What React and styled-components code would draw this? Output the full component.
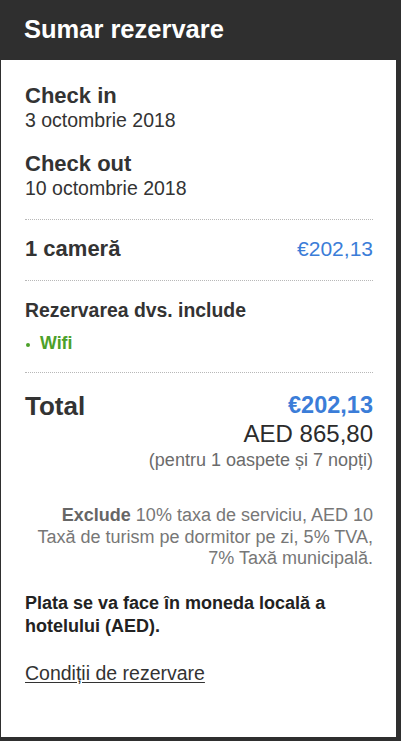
import React from 'react';
import styled, { createGlobalStyle } from 'styled-components';

const GlobalStyle = createGlobalStyle`
  html, body {
    margin: 0;
    padding: 0;
    background: #fff;
  }
  body {
    font-family: 'Liberation Sans', Arial, sans-serif;
    color: #333;
  }
`;

const Frame = styled.div`
  display: flex;
  flex-direction: column;
  min-height: 100vh;
  box-sizing: border-box;
  background: #2f2f2f;
  padding: 0 5px 4px 1px;
`;

const Header = styled.h1`
  margin: 0 -5px 0 -1px;
  height: 60px;
  display: flex;
  align-items: center;
  padding: 0 0 2px 24px;
  box-sizing: border-box;
  font-size: 25.5px;
  font-weight: 700;
  color: #fff;
`;

const Panel = styled.div`
  flex: 1;
  background: #fff;
  padding: 24px 23px 0 24px;
`;

const Label = styled.div`
  font-size: 22px;
  font-weight: 700;
  line-height: 24px;
  margin-top: ${(p) => p.$top || 0}px;
`;

const DateText = styled.div`
  font-size: 19.5px;
  line-height: 23px;
  margin-top: 1px;
`;

const Divider = styled.hr`
  border: 0;
  border-top: 1px dotted #b8b8b8;
  margin: ${(p) => p.$top}px 0 0;
  height: 0;
`;

const Row = styled.div`
  display: flex;
  justify-content: space-between;
  align-items: ${(p) => p.$align || 'baseline'};
  margin-top: ${(p) => p.$top || 0}px;
`;

const Price = styled.span`
  font-size: 21px;
  color: #3b7dd8;
`;

const SubTitle = styled.div`
  font-size: 19.4px;
  font-weight: 700;
  line-height: 22px;
  margin-top: 18px;
`;

const Amenities = styled.ul`
  list-style: none;
  margin: 12px 0 0;
  padding: 0;
`;

const Amenity = styled.li`
  position: relative;
  padding-left: 15px;
  font-size: 17.8px;
  line-height: 20px;
  font-weight: 700;
  color: #4ca12a;

  &::before {
    content: '';
    position: absolute;
    left: 1px;
    top: 10px;
    width: 4px;
    height: 4px;
    border-radius: 50%;
    background: #4ca12a;
  }
`;

const TotalLabel = styled.div`
  font-size: 26px;
  font-weight: 700;
  line-height: 28px;
`;

const Amounts = styled.div`
  display: flex;
  flex-direction: column;
  align-items: flex-end;
  text-align: right;
`;

const TotalPrice = styled.div`
  font-size: 23.5px;
  font-weight: 700;
  line-height: 26px;
  color: #3b7dd8;
`;

const LocalPrice = styled.div`
  font-size: 24px;
  line-height: 26px;
  margin-top: 3px;
  color: #2b2b2b;
`;

const Note = styled.div`
  font-size: 18px;
  line-height: 22px;
  margin-top: 2px;
  color: #6b6b6b;
`;

const Excludes = styled.p`
  margin: 34px 0 0;
  text-align: right;
  font-size: 18px;
  line-height: 21.5px;
  color: #777;

  b {
    color: #666;
  }
`;

const Payment = styled.p`
  margin: 22px 0 0;
  font-size: 18px;
  line-height: 23px;
  font-weight: 700;
  color: #222;
`;

const TermsLink = styled.a`
  display: inline-block;
  margin-top: 24px;
  font-size: 19.5px;
  line-height: 22px;
  color: #333;
  text-decoration: underline;
  text-underline-offset: 2px;
`;

const App = () => (
  <>
    <GlobalStyle />
    <Frame>
      <Header>Sumar rezervare</Header>
      <Panel>
        <Label>Check in</Label>
        <DateText>3 octombrie 2018</DateText>
        <Label $top={20}>Check out</Label>
        <DateText>10 octombrie 2018</DateText>

        <Divider $top={19} />
        <Row $top={17}>
          <Label>1 cameră</Label>
          <Price>€202,13</Price>
        </Row>

        <Divider $top={19} />
        <SubTitle>Rezervarea dvs. include</SubTitle>
        <Amenities>
          <Amenity>Wifi</Amenity>
        </Amenities>

        <Divider $top={19} />
        <Row $top={19} $align="flex-start">
          <TotalLabel>Total</TotalLabel>
          <Amounts>
            <TotalPrice>€202,13</TotalPrice>
            <LocalPrice>AED 865,80</LocalPrice>
            <Note>(pentru 1 oaspete și 7 nopți)</Note>
          </Amounts>
        </Row>

        <Excludes>
          <b>Exclude</b> 10% taxa de serviciu, AED 10
          <br />
          Taxă de turism pe dormitor pe zi, 5% TVA,
          <br />
          7% Taxă municipală.
        </Excludes>

        <Payment>Plata se va face în moneda locală a hotelului (AED).</Payment>

        <TermsLink href="#">Condiții de rezervare</TermsLink>
      </Panel>
    </Frame>
  </>
);

export default App;
